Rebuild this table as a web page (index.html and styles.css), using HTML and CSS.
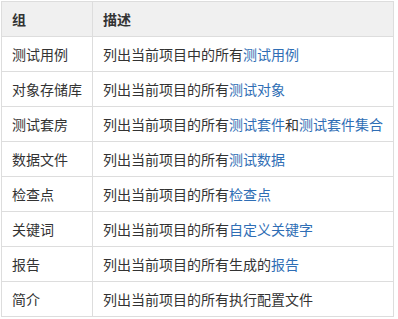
FILE: index.html
```html
<!DOCTYPE html>
<html lang="zh">
<head>
<meta charset="utf-8">
<link rel="stylesheet" href="styles.css">
</head>
<body>
<table class="grid">
  <colgroup><col class="c1"><col class="c2"></colgroup>
  <thead>
    <tr><th>组</th><th>描述</th></tr>
  </thead>
  <tbody>
    <tr><td>测试用例</td><td>列出当前项目中的所有<a href="#">测试用例</a></td></tr>
    <tr><td>对象存储库</td><td>列出当前项目的所有<a href="#">测试对象</a></td></tr>
    <tr><td>测试套房</td><td>列出当前项目的所有<a href="#">测试套件</a>和<a href="#">测试套件集合</a></td></tr>
    <tr><td>数据文件</td><td>列出当前项目的所有<a href="#">测试数据</a></td></tr>
    <tr><td>检查点</td><td>列出当前项目的所有<a href="#">检查点</a></td></tr>
    <tr><td>关键词</td><td>列出当前项目的所有<a href="#">自定义关键字</a></td></tr>
    <tr><td>报告</td><td>列出当前项目的所有生成的<a href="#">报告</a></td></tr>
    <tr><td>简介</td><td>列出当前项目的所有执行配置文件</td></tr>
  </tbody>
</table>
</body>
</html>
```
FILE: styles.css
```css
html, body {
  margin: 0;
  background: #fff;
}
body {
  padding: 1px;
  font-family: "Noto Sans CJK SC", "Noto Sans", sans-serif;
  font-size: 14px;
  color: #333;
}
.grid {
  border-collapse: separate;
  border-spacing: 0;
  table-layout: fixed;
  width: 393px;
  border-top: 1px solid #ddd;
  border-left: 1px solid #ddd;
}
.c1 { width: 91px; }
.c2 { width: 301px; }
.grid th,
.grid td {
  box-sizing: border-box;
  height: 35px;
  padding: 0 0 0 10px;
  border-right: 1px solid #ddd;
  border-bottom: 1px solid #ddd;
  text-align: left;
  vertical-align: middle;
  white-space: nowrap;
  line-height: 20px;
}
.grid th {
  background: #f0f0f0;
  font-weight: bold;
  color: #333;
}
.grid a {
  color: #2f6eb5;
  text-decoration: none;
}
```
